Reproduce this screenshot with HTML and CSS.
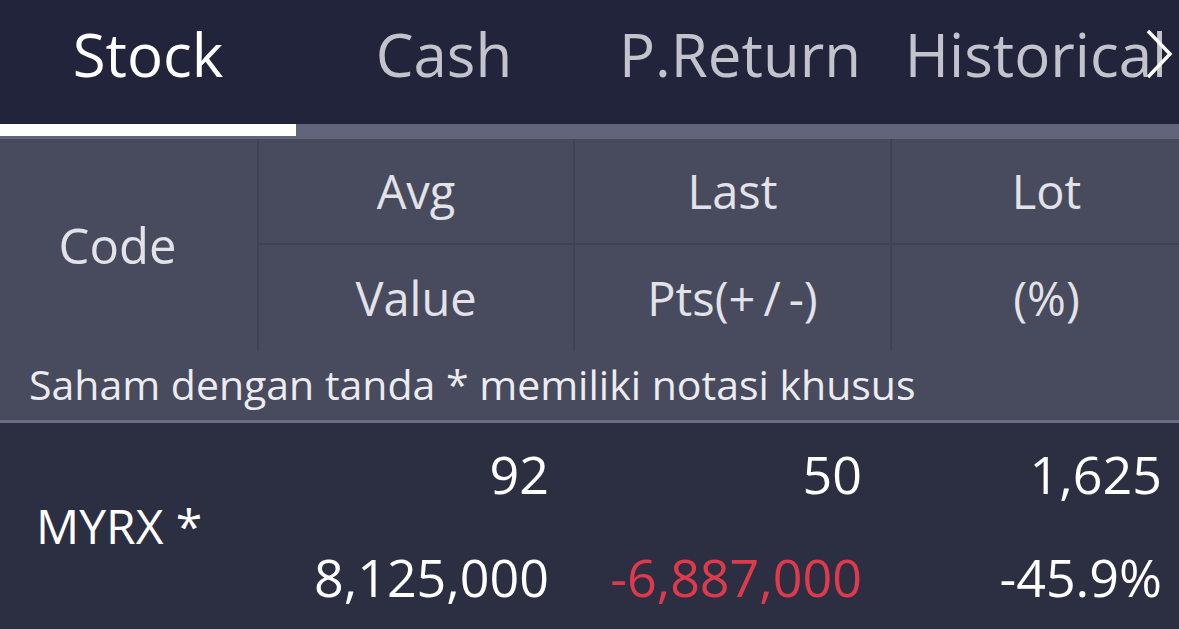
FILE: index.html
```html
<!DOCTYPE html>
<html lang="id">
<head>
  <meta charset="UTF-8">
  <meta name="viewport" content="width=device-width, initial-scale=1.0">
  <title>Portfolio</title>
  <link rel="stylesheet" href="styles.css">
</head>
<body>
  <div class="tabs">
    <div class="tab-row">
      <div class="tab active">Stock</div>
      <div class="tab">Cash</div>
      <div class="tab">P.Return</div>
      <div class="tab">Historical</div>
    </div>
    <svg class="tab-next" width="30" height="52" viewBox="0 0 30 52">
      <path d="M4 3 L26 26 L4 49" fill="none" stroke="#ffffff" stroke-width="3.5"/>
    </svg>
    <div class="tab-track">
      <div class="tab-indicator"></div>
    </div>
  </div>

  <div class="table-head">
    <div class="head-grid">
      <div class="head-cell code">Code</div>
      <div class="head-cell">Avg</div>
      <div class="head-cell">Last</div>
      <div class="head-cell lot">Lot</div>
      <div class="head-cell">Value</div>
      <div class="head-cell">Pts(+<span class="sp">/</span>-)</div>
      <div class="head-cell lot">(%)</div>
    </div>
    <div class="note">Saham dengan tanda * memiliki notasi khusus</div>
  </div>

  <div class="row">
    <div class="row-code">MYRX *</div>
    <div class="num c-avg">92</div>
    <div class="num c-last">50</div>
    <div class="num c-lot">1,625</div>
    <div class="num c-avg">8,125,000</div>
    <div class="num c-last down">-6,887,000</div>
    <div class="num c-lot">-45.9%</div>
  </div>
</body>
</html>
```

FILE: styles.css
```css
* {
  margin: 0;
  padding: 0;
  box-sizing: border-box;
}

body {
  width: 1179px;
  height: 629px;
  font-family: "Open Sans", "DejaVu Sans", sans-serif;
  background: #2c2f42;
  color: #ffffff;
  overflow: hidden;
}

/* tabs */
.tabs {
  position: relative;
  background: #21243a;
  height: 139px;
}

.tab-row {
  display: grid;
  grid-template-columns: 296px 296px 296px 296px;
  height: 124px;
  white-space: nowrap;
}

.tab {
  font-size: 60px;
  color: #c3c3cb;
  text-align: center;
  line-height: 108px;
}

.tab.active {
  color: #ffffff;
}

.tab-next {
  position: absolute;
  top: 28px;
  right: 5px;
}

.tab-track {
  height: 15px;
  background: #62647b;
}

.tab-indicator {
  width: 296px;
  height: 12px;
  background: #ffffff;
}

/* header */
.table-head {
  background: #484a5e;
  border-bottom: 3px solid #6b6d82;
}

.head-grid {
  display: grid;
  grid-template-columns: 257px 316px 317px 289px;
  grid-template-rows: 106px 106px;
}

.head-cell {
  display: flex;
  align-items: center;
  justify-content: center;
  font-size: 47px;
  color: #e2e2e8;
  border-left: 2px solid #3f4155;
}

.head-cell:nth-child(2),
.head-cell:nth-child(3),
.head-cell:nth-child(4) {
  border-bottom: 2px solid #3f4155;
}

.head-cell.code {
  grid-row: span 2;
  border-left: none;
  padding-right: 22px;
  font-size: 49px;
}

.head-cell.lot {
  padding-left: 22px;
}

.sp {
  padding: 0 8px;
}

.note {
  height: 69px;
  padding-left: 29px;
  font-size: 41px;
  line-height: 66px;
  color: #ececf0;
}

/* data row */
.row {
  display: grid;
  grid-template-columns: 257px 316px 317px 289px;
  grid-template-rows: 103px 102px;
  background: #2c2f42;
}

.row-code {
  grid-row: span 2;
  display: flex;
  align-items: center;
  padding-left: 36px;
  font-size: 48px;
}

.num {
  text-align: right;
  font-size: 52px;
  line-height: 102px;
}

.c-avg { padding-right: 24px; }
.c-last { padding-right: 28px; }
.c-lot { padding-right: 17px; }

.down {
  color: #df3a4c;
}
```
